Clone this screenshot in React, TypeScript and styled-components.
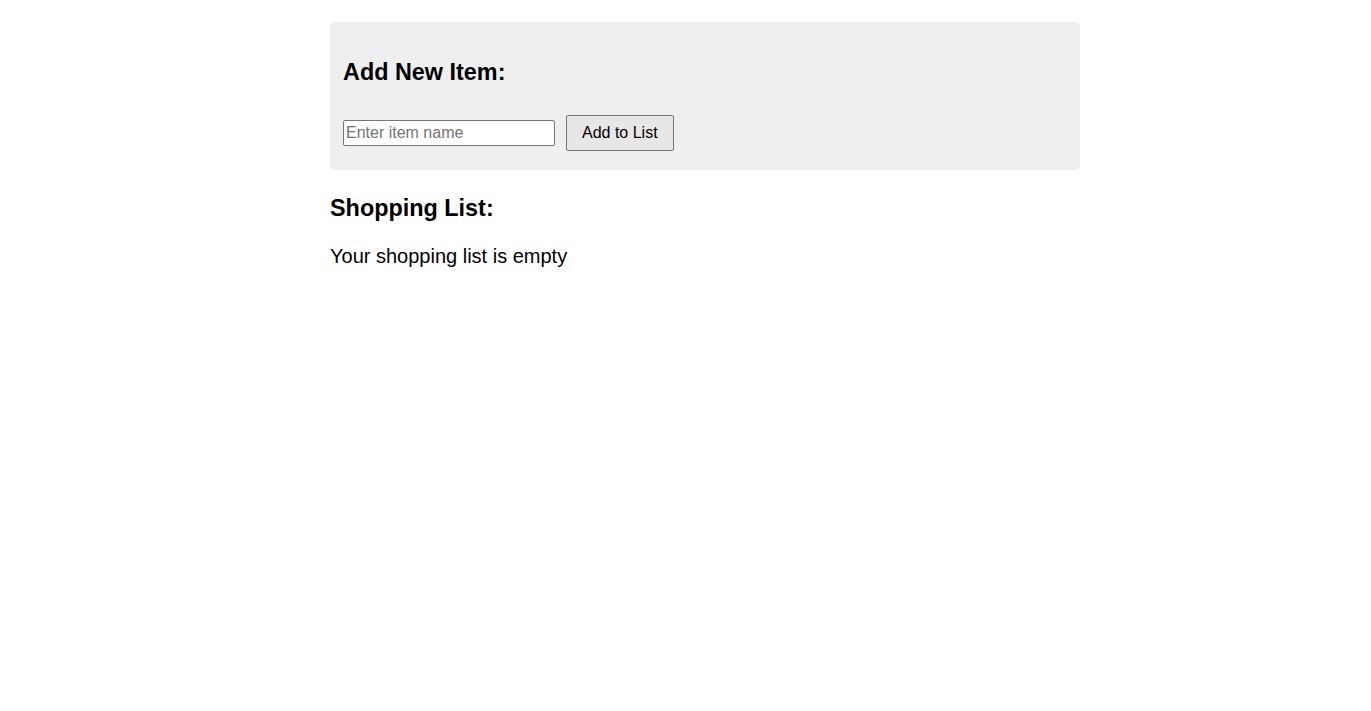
import React, { useState } from 'react';
import styled, { createGlobalStyle } from 'styled-components';

const GlobalStyle = createGlobalStyle`
  body {
    margin: 0;
    background: #fff;
    color: #000;
    font-family: "Liberation Sans", Arial, sans-serif;
  }
`;

const Page = styled.div`
  width: 750px;
  padding: 22px 0 0 330px;
`;

const FormPanel = styled.div`
  background: #efefef;
  border-radius: 5px;
  padding: 13px;
`;

const Heading = styled.h3`
  font-size: 23.4px;
  font-weight: bold;
  line-height: 26px;
  margin: 23px 0;
`;

const PanelHeading = styled(Heading)`
  margin: 24px 0 22px;
`;

const InputRow = styled.div`
  display: flex;
  align-items: center;
  gap: 11px;
  padding: 8px 0 6px;
`;

const ItemInput = styled.input`
  box-sizing: border-box;
  width: 212px;
  height: 26px;
  padding: 1px 2px;
  border: 1px solid #767676;
  border-radius: 2px;
  background: #fff;
  font-family: "Liberation Sans", Arial, sans-serif;
  font-size: 16px;
  color: #000;
  &::placeholder {
    color: #757575;
  }
`;

const AddButton = styled.button`
  box-sizing: border-box;
  height: 36px;
  padding: 0 15px;
  border: 1px solid #767676;
  border-radius: 2px;
  background: #e7e7e7;
  font-family: "Liberation Sans", Arial, sans-serif;
  font-size: 16px;
  color: #000;
  cursor: pointer;
`;

const ListHeading = styled(Heading)`
  margin: 25px 0 23px;
`;

const EmptyNote = styled.p`
  font-size: 20px;
  line-height: 24px;
  margin: 0;
`;

const Item = styled.li`
  font-size: 20px;
  line-height: 30px;
`;

export default function App() {
  const [name, setName] = useState('');
  const [items, setItems] = useState<string[]>([]);

  const addItem = () => {
    if (!name.trim()) return;
    setItems([...items, name.trim()]);
    setName('');
  };

  return (
    <>
      <GlobalStyle />
      <Page>
        <FormPanel>
          <PanelHeading>Add New Item:</PanelHeading>
          <InputRow>
            <ItemInput
              placeholder="Enter item name"
              value={name}
              onChange={(e) => setName(e.target.value)}
            />
            <AddButton onClick={addItem}>Add to List</AddButton>
          </InputRow>
        </FormPanel>
        <ListHeading>Shopping List:</ListHeading>
        {items.length === 0 ? (
          <EmptyNote>Your shopping list is empty</EmptyNote>
        ) : (
          <ul>
            {items.map((it, i) => (
              <Item key={i}>{it}</Item>
            ))}
          </ul>
        )}
      </Page>
    </>
  );
}
